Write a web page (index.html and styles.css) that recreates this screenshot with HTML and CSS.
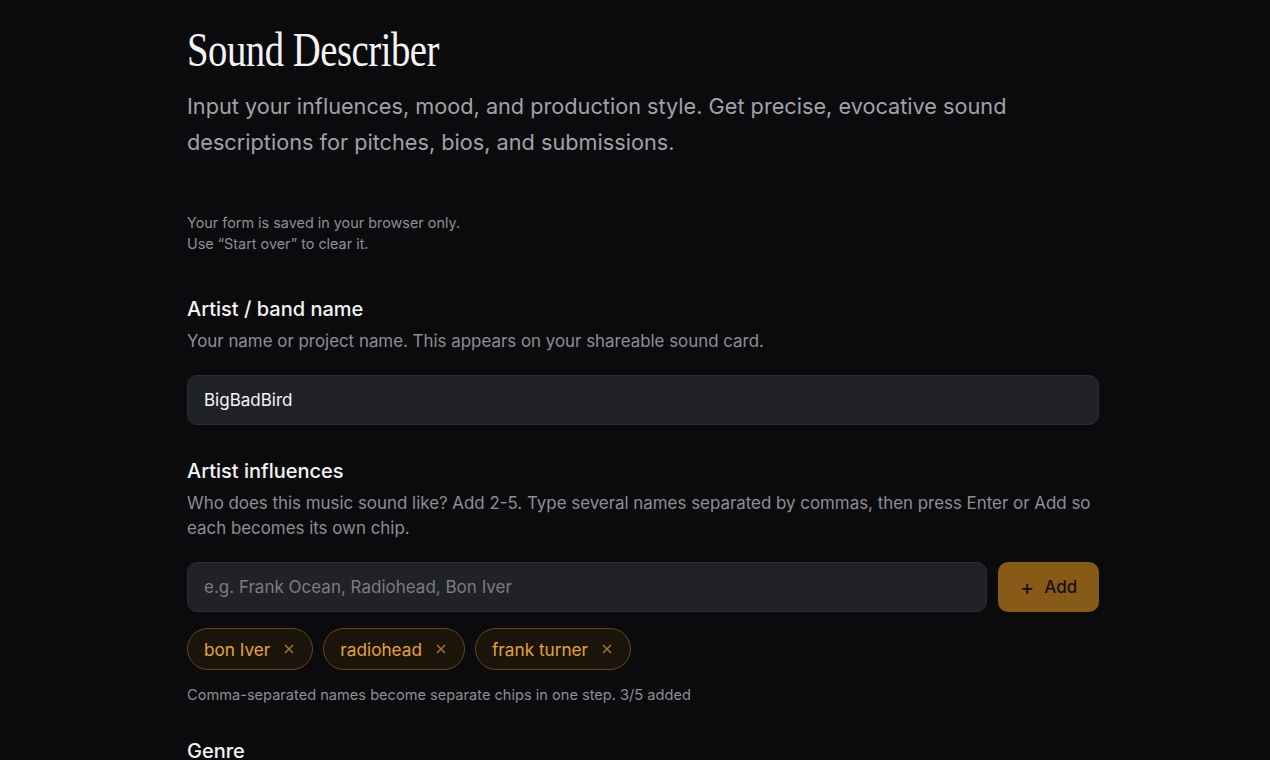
FILE: index.html
```html
<!DOCTYPE html>
<html lang="en">
<head>
  <meta charset="UTF-8">
  <title>Sound Describer</title>
  <link rel="stylesheet" href="styles.css">
</head>
<body>
<div class="page">
  <header class="head">
    <h1 class="title">Sound Describer</h1>
    <p class="lead">Input your influences, mood, and production style. Get precise, evocative sound descriptions for pitches, bios, and submissions.</p>
  </header>

  <p class="saved">Your form is saved in your browser only.<br>Use “Start over” to clear it.</p>

  <section class="field">
    <h2 class="label">Artist / band name</h2>
    <p class="help">Your name or project name. This appears on your shareable sound card.</p>
    <input class="input" type="text" value="BigBadBird">
  </section>

  <section class="field">
    <h2 class="label">Artist influences</h2>
    <p class="help">Who does this music sound like? Add 2-5. Type several names separated by commas, then press Enter or Add so each becomes its own chip.</p>
    <div class="addrow">
      <input class="input" type="text" placeholder="e.g. Frank Ocean, Radiohead, Bon Iver">
      <button class="add"><span class="plus">+</span>Add</button>
    </div>
    <ul class="chips">
      <li class="chip">bon Iver <svg class="x" viewBox="0 0 10 10"><path d="M1 1L9 9M9 1L1 9"/></svg></li>
      <li class="chip">radiohead <svg class="x" viewBox="0 0 10 10"><path d="M1 1L9 9M9 1L1 9"/></svg></li>
      <li class="chip">frank turner <svg class="x" viewBox="0 0 10 10"><path d="M1 1L9 9M9 1L1 9"/></svg></li>
    </ul>
    <p class="note">Comma-separated names become separate chips in one step. 3/5 added</p>
  </section>

  <section class="field">
    <h2 class="label">Genre</h2>
  </section>
</div>
</body>
</html>
```

FILE: styles.css
```css
*{
    margin: 0;
    padding: 0;
    box-sizing: border-box;
}
body{
    background: #0b0b0d;
    color: #f4f4f5;
    font-family: Inter, "Noto Sans", sans-serif;
    overflow: hidden;
}
.page{
    width: 912px;
    margin-left: 187px;
    padding-top: 22px;
}
.title{
    font-family: "Liberation Serif", serif;
    font-weight: 400;
    font-size: 49px;
    line-height: 56px;
    letter-spacing: -0.6px;
    transform: scaleX(0.79);
    transform-origin: left;
    color: #f4f4f5;
}
.lead{
    margin-top: 10px;
    font-size: 21.7px;
    line-height: 36px;
    color: #a1a1aa;
    max-width: 840px;
}
.saved{
    margin-top: 52px;
    font-size: 14.4px;
    line-height: 21px;
    color: #8e8e96;
}
.field{
    margin-top: 41px;
}
.field + .field{
    margin-top: 32px;
}
.label{
    font-size: 20px;
    font-weight: 500;
    line-height: 28px;
    color: #f4f4f5;
}
.help{
    margin-top: 6px;
    font-size: 16.9px;
    line-height: 25px;
    color: #8e8e96;
}
.input{
    display: block;
    width: 100%;
    height: 50px;
    margin-top: 21px;
    padding: 0 16px;
    background: #212128;
    border: 1px solid #2c2c33;
    border-radius: 10px;
    color: #f4f4f5;
    font-family: inherit;
    font-size: 17px;
    outline: none;
}
.input::placeholder{
    color: #7c7c84;
}
.addrow{
    display: flex;
    gap: 11px;
    margin-top: 21px;
}
.addrow .input{
    margin-top: 0;
    flex: 1;
}
.add{
    width: 101px;
    height: 50px;
    display: flex;
    align-items: center;
    justify-content: center;
    gap: 10px;
    background: #875a17;
    border: none;
    border-radius: 10px;
    color: #141210;
    font-family: inherit;
    font-size: 17px;
    font-weight: 500;
}
.plus{
    font-size: 22px;
    font-weight: 400;
    line-height: 1;
}
.chips{
    list-style: none;
    display: flex;
    gap: 10px;
    margin-top: 16px;
}
.chip{
    height: 42px;
    display: flex;
    align-items: center;
    gap: 14px;
    padding: 0 18px 0 16px;
    border: 1px solid #6a4716;
    border-radius: 21px;
    background: #1a140b;
    color: #e6a23a;
    font-size: 17.2px;
}
.x{
    width: 10px;
    height: 10px;
    stroke: #b07d2e;
    stroke-width: 1.3;
    fill: none;
}
.note{
    margin-top: 15px;
    font-size: 14.6px;
    line-height: 20px;
    color: #8e8e96;
}
```
